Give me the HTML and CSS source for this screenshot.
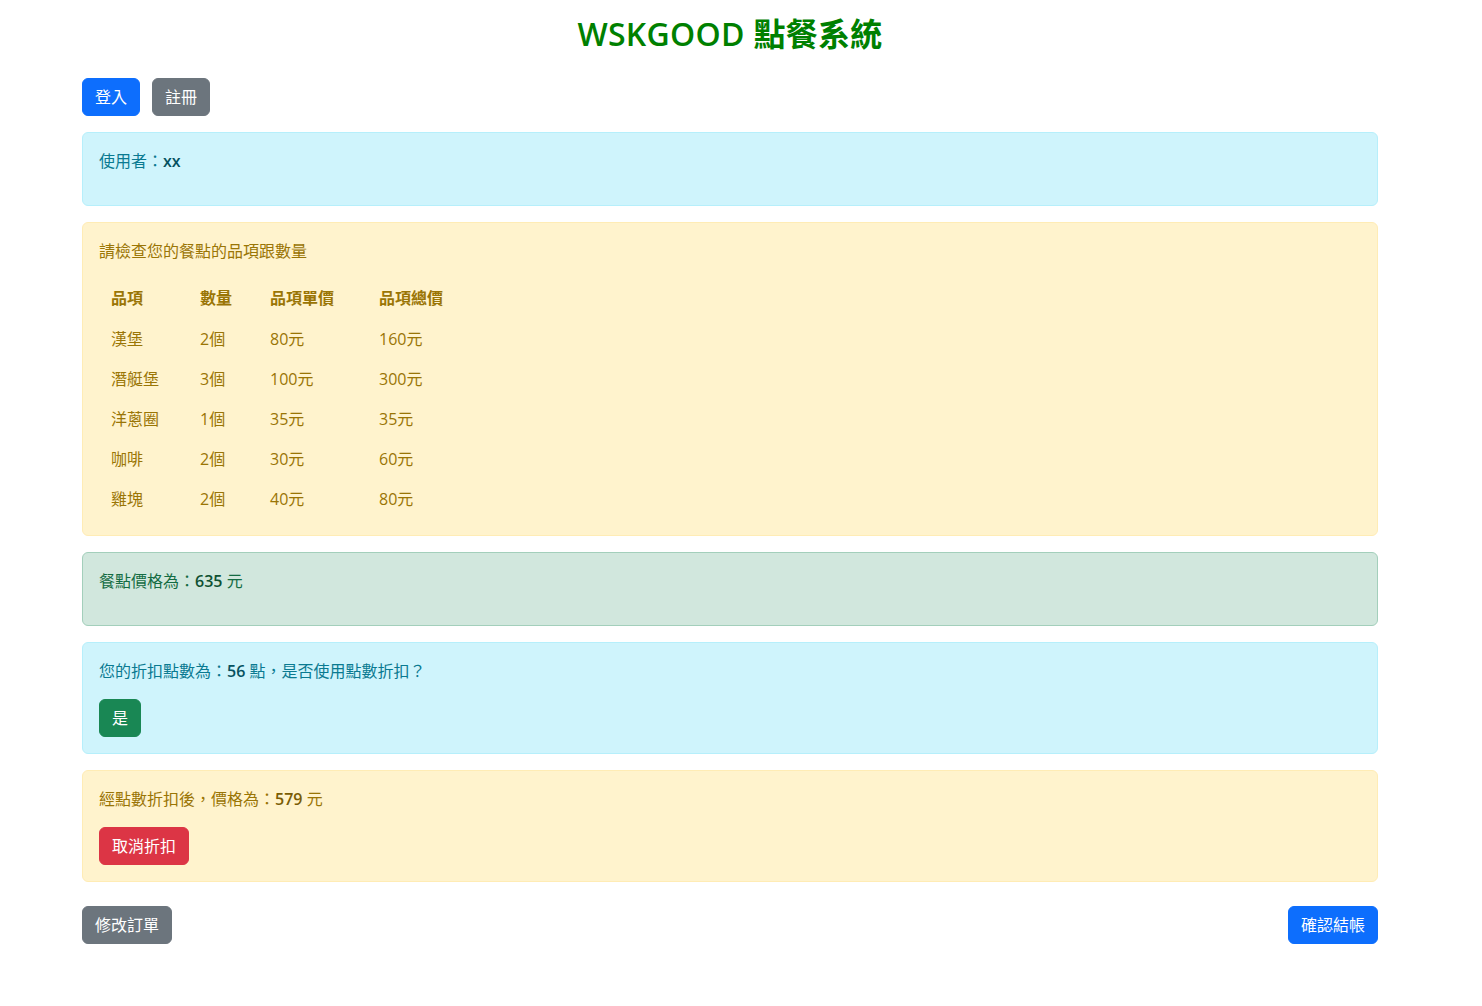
FILE: index.html
```html
<!DOCTYPE html>
<html lang="zh-Hant">
<head>
<meta charset="utf-8">
<title>WSKGOOD 點餐系統</title>
<link rel="stylesheet" href="styles.css">
</head>
<body>
<div class="page">
  <h2 class="title">WSKGOOD 點餐系統</h2>
  <div class="auth">
    <button class="btn btn-primary">登入</button>
    <button class="btn btn-secondary">註冊</button>
  </div>

  <div class="alert alert-info">
    <p>使用者：<strong>xx</strong></p>
  </div>

  <div class="alert alert-warning">
    <p>請檢查您的餐點的品項跟數量</p>
    <table class="order">
      <colgroup>
        <col class="c1"><col class="c2"><col class="c3"><col>
      </colgroup>
      <thead>
        <tr><th>品項</th><th>數量</th><th>品項單價</th><th>品項總價</th></tr>
      </thead>
      <tbody>
        <tr><td>漢堡</td><td>2個</td><td>80元</td><td>160元</td></tr>
        <tr><td>潛艇堡</td><td>3個</td><td>100元</td><td>300元</td></tr>
        <tr><td>洋蔥圈</td><td>1個</td><td>35元</td><td>35元</td></tr>
        <tr><td>咖啡</td><td>2個</td><td>30元</td><td>60元</td></tr>
        <tr><td>雞塊</td><td>2個</td><td>40元</td><td>80元</td></tr>
      </tbody>
    </table>
  </div>

  <div class="alert alert-success">
    <p>餐點價格為：<strong>635</strong> 元</p>
  </div>

  <div class="alert alert-info">
    <p>您的折扣點數為：<strong>56</strong> 點，是否使用點數折扣？</p>
    <button class="btn btn-success">是</button>
  </div>

  <div class="alert alert-warning">
    <p>經點數折扣後，價格為：<strong>579</strong> 元</p>
    <button class="btn btn-danger">取消折扣</button>
  </div>

  <div class="actions">
    <button class="btn btn-secondary">修改訂單</button>
    <button class="btn btn-primary">確認結帳</button>
  </div>
</div>
</body>
</html>
```

FILE: styles.css
```css
* { box-sizing: border-box; }

html, body {
  margin: 0;
  padding: 0;
  background: #fff;
}

body {
  font-family: "Open Sans", "Noto Sans", "Noto Sans CJK TC", sans-serif;
  font-size: 16px;
  line-height: 24px;
  color: #212529;
}

.page {
  width: 1296px;
  margin: 0 82px;
}

.title {
  margin: 15px 0 25px;
  font-size: 32px;
  line-height: 38px;
  font-weight: 600;
  color: #008000;
  text-align: center;
  letter-spacing: 0.3px;
}

.auth {
  display: flex;
  gap: 12px;
  margin-bottom: 16px;
}

.btn {
  display: inline-block;
  font-family: inherit;
  font-size: 16px;
  line-height: 24px;
  padding: 6px 12px;
  border: 1px solid transparent;
  border-radius: 6px;
  color: #fff;
  cursor: pointer;
}

.btn-primary { background: #0d6efd; border-color: #0d6efd; }
.btn-secondary { background: #6c757d; border-color: #6c757d; }
.btn-success { background: #198754; border-color: #198754; }
.btn-danger { background: #dc3545; border-color: #dc3545; }

.alert {
  padding: 16px;
  margin-bottom: 16px;
  border: 1px solid transparent;
  border-radius: 6px;
}

.alert p {
  margin: 0 0 16px;
}

.alert strong { font-weight: 600; }

.alert-info {
  background: #cff4fc;
  border-color: #b6effb;
  color: #0a7a91;
}
.alert-info strong { color: #055160; }

.alert-warning {
  background: #fff3cd;
  border-color: #ffecb5;
  color: #9a7505;
}
.alert-warning strong { color: #7a5c04; }

.alert-success {
  background: #d1e7dd;
  border-color: #a3cfbb;
  color: #146c43;
}
.alert-success strong { color: #0f5132; }

.order {
  border-collapse: collapse;
  margin: 0;
}

.order .c1 { width: 89px; }
.order .c2 { width: 70px; }
.order .c3 { width: 109px; }

.order th,
.order td {
  padding: 8px 12px;
  text-align: left;
  white-space: nowrap;
}

.order th {
  font-weight: 600;
  padding: 7px 12px 9px;
}

.actions {
  display: flex;
  justify-content: space-between;
  margin-top: 24px;
}
```
